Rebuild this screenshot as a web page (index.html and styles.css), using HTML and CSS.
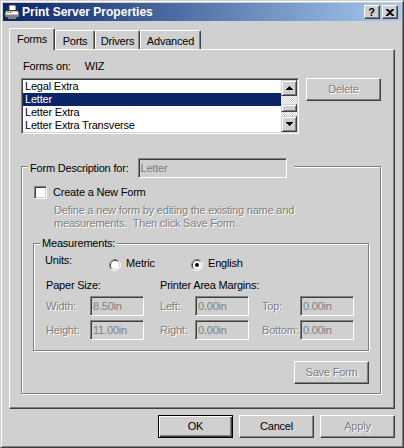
FILE: index.html
```html
<!DOCTYPE html>
<html lang="en">
<head>
    <meta charset="UTF-8">
    <meta name="viewport" content="width=device-width, initial-scale=1.0">
    <title>Print Server Properties</title>
    <link rel="stylesheet" href="styles.css">
</head>
<body>
    <div class="window">
        <div class="titlebar">
            <svg class="app-icon" width="16" height="16" viewBox="0 0 16 16">
                <path d="M5 1h6l1 1v5H5z" fill="#fff" stroke="#404040" stroke-width="1"/>
                <path d="M2.5 6.5h11l1.5 2v4.5h-14v-4.5z" fill="#c0c0c0" stroke="#404040"/>
                <rect x="2" y="8" width="12" height="2" fill="#fff"/>
                <rect x="3" y="8" width="2" height="1" fill="#00c000"/>
                <rect x="6" y="8" width="1" height="1" fill="#e00000"/>
                <rect x="2" y="11" width="12" height="1" fill="#808080"/>
                <rect x="4" y="13" width="8" height="2" fill="#808080"/>
            </svg>
            <span class="title">Print Server Properties</span>
            <div class="caption-buttons">
                <div class="cap-btn help">?</div>
                <div class="cap-btn close">
                    <svg width="8" height="7" viewBox="0 0 8 7">
                        <path d="M0 0h2l2 2 2-2h2v1L5 3.5 8 6v1H6L4 5 2 7H0V6l3-2.5L0 1z" fill="#000"/>
                    </svg>
                </div>
            </div>
        </div>

        <div class="tabs">
            <div class="tab active">Forms</div>
            <div class="tab">Ports</div>
            <div class="tab">Drivers</div>
            <div class="tab">Advanced</div>
        </div>

        <div class="panel">
            <div class="forms-on">Forms on:<span class="server">WIZ</span></div>

            <div class="list-row">
                <div class="listbox">
                    <ul class="items">
                        <li>Legal Extra</li>
                        <li class="selected">Letter</li>
                        <li>Letter Extra</li>
                        <li>Letter Extra Transverse</li>
                    </ul>
                    <div class="scrollbar">
                        <div class="sb-btn">
                            <svg width="7" height="4" viewBox="0 0 7 4"><path d="M3 0h1v1h1v1h1v1h1v1H0V3h1V2h1V1h1z" fill="#000"/></svg>
                        </div>
                        <div class="sb-track"><div class="sb-thumb"></div></div>
                        <div class="sb-btn">
                            <svg width="7" height="4" viewBox="0 0 7 4"><path d="M0 0h7v1H6v1H5v1H4v1H3V3H2V2H1V1H0z" fill="#000"/></svg>
                        </div>
                    </div>
                </div>
                <div class="btn disabled delete-btn">Delete</div>
            </div>

            <div class="group desc-group">
                <div class="legend legend-wide">
                    <span>Form Description for:</span>
                    <span class="field legend-field">Letter</span>
                </div>

                <div class="check-row">
                    <span class="checkbox"></span>
                    <span>Create a New Form</span>
                </div>

                <p class="hint disabled-text">Define a new form by editing the existing name and<br>measurements.&nbsp; Then click Save Form.</p>

                <div class="group measure-group">
                    <div class="legend">Measurements:</div>

                    <div class="units-row">
                        <span class="units-label">Units:</span>
                        <label class="radio metric">
                            <svg width="12" height="12" viewBox="0 0 12 12">
                                <path d="M2.11 9.89A5.5 5.5 0 0 1 9.89 2.11" fill="none" stroke="#808080"/>
                                <path d="M9.89 2.11A5.5 5.5 0 0 1 2.11 9.89" fill="none" stroke="#fff"/>
                                <path d="M2.82 9.18A4.5 4.5 0 0 1 9.18 2.82" fill="none" stroke="#404040"/>
                                <path d="M9.18 2.82A4.5 4.5 0 0 1 2.82 9.18" fill="none" stroke="#d0d0d0"/>
                                <circle cx="6" cy="6" r="4" fill="#fff"/>
                            </svg>
                            <span>Metric</span>
                        </label>
                        <label class="radio">
                            <svg width="12" height="12" viewBox="0 0 12 12">
                                <path d="M2.11 9.89A5.5 5.5 0 0 1 9.89 2.11" fill="none" stroke="#808080"/>
                                <path d="M9.89 2.11A5.5 5.5 0 0 1 2.11 9.89" fill="none" stroke="#fff"/>
                                <path d="M2.82 9.18A4.5 4.5 0 0 1 9.18 2.82" fill="none" stroke="#404040"/>
                                <path d="M9.18 2.82A4.5 4.5 0 0 1 2.82 9.18" fill="none" stroke="#d0d0d0"/>
                                <circle cx="6" cy="6" r="4" fill="#fff"/>
                                <circle cx="6" cy="6" r="2" fill="#000"/>
                            </svg>
                            <span>English</span>
                        </label>
                    </div>

                    <div class="size-grid">
                        <span class="head-paper">Paper Size:</span>
                        <span class="head-margins">Printer Area Margins:</span>

                        <span class="disabled-text">Width:</span>
                        <span class="field">8.50in</span>
                        <span class="disabled-text">Left:</span>
                        <span class="field">0.00in</span>
                        <span class="disabled-text">Top:</span>
                        <span class="field">0.00in</span>

                        <span class="disabled-text">Height:</span>
                        <span class="field">11.00in</span>
                        <span class="disabled-text">Right:</span>
                        <span class="field">0.00in</span>
                        <span class="disabled-text">Bottom:</span>
                        <span class="field">0.00in</span>
                    </div>
                </div>

                <div class="save-row">
                    <div class="btn disabled">Save Form</div>
                </div>
            </div>
        </div>

        <div class="dialog-buttons">
            <div class="btn default">OK</div>
            <div class="btn">Cancel</div>
            <div class="btn disabled">Apply</div>
        </div>
    </div>
</body>
</html>
```

FILE: styles.css
```css
* {
    box-sizing: border-box;
}
body {
    margin: 0;
    font-family: "Liberation Sans", Arial, sans-serif;
    font-size: 11px;
    line-height: 13px;
    letter-spacing: -0.2px;
    color: #000;
    background: #d0d0d0;
}
.window {
    width: 404px;
    height: 448px;
    background-color: #d0d0d0;
    border: 1px solid;
    border-color: #d0d0d0 #404040 #404040 #d0d0d0;
    box-shadow: inset 1px 1px 0 #fff, inset -1px -1px 0 #808080;
    padding: 2px;
}

/* title bar */
.titlebar {
    height: 18px;
    display: flex;
    align-items: center;
    background: linear-gradient(to right, #0a246a, #a6caf0);
    color: #fff;
}
.app-icon {
    margin-left: 1px;
    flex-shrink: 0;
}
.title {
    margin-left: 2px;
    font-weight: bold;
    font-size: 12px;
    letter-spacing: 0;
}
.caption-buttons {
    margin-left: auto;
    margin-right: 3px;
    display: flex;
    gap: 2px;
}
.cap-btn {
    width: 16px;
    height: 14px;
    background-color: #d0d0d0;
    border: 1px solid;
    border-color: #fff #404040 #404040 #fff;
    box-shadow: inset -1px -1px 0 #808080;
    display: flex;
    align-items: center;
    justify-content: center;
    color: #000;
}
.cap-btn.help {
    font-weight: bold;
    font-size: 11px;
    line-height: 12px;
    padding-right: 1px;
}
.cap-btn.close svg {
    margin-left: -1px;
}

/* tabs */
.tabs {
    display: flex;
    align-items: flex-end;
    height: 21px;
    margin: 7px 6px 0 6px;
}
.tab {
    height: 19px;
    padding-top: 4px;
    text-align: center;
    background-color: #d0d0d0;
    border-top: 1px solid #fff;
    border-left: 1px solid #fff;
    border-right: 1px solid #404040;
    border-radius: 2px 2px 0 0;
    box-shadow: inset -1px 0 0 #808080;
}
.tab:nth-child(2) { width: 40px; }
.tab:nth-child(3) { width: 45px; }
.tab:nth-child(4) { width: 61px; }
.tab.active {
    width: 46px;
    height: 22px;
    margin-bottom: -1px;
    padding-top: 4px;
    position: relative;
    z-index: 1;
}

/* tab page */
.panel {
    height: 360px;
    margin: 0 6px;
    border: 1px solid;
    border-color: #fff #404040 #404040 #fff;
    box-shadow: inset -1px -1px 0 #808080;
}
.forms-on {
    margin: 10px 0 0 13px;
}
.server {
    margin-left: 14px;
}
.list-row {
    display: flex;
    align-items: flex-start;
    margin: 5px 0 0 11px;
}
.listbox {
    width: 278px;
    height: 56px;
    display: flex;
    background-color: #fff;
    border: 1px solid;
    border-color: #808080 #fff #fff #808080;
    box-shadow: inset 1px 1px 0 #404040, inset -1px -1px 0 #d0d0d0;
    padding: 1px;
}
.items {
    list-style: none;
    margin: 0;
    padding: 0;
    width: 258px;
}
.items li {
    height: 13px;
    line-height: 13px;
    padding-left: 2px;
    white-space: nowrap;
}
.items li.selected {
    background-color: #0a246a;
    color: #fff;
}
.scrollbar {
    width: 16px;
    display: flex;
    flex-direction: column;
}
.sb-btn {
    width: 16px;
    height: 16px;
    display: flex;
    align-items: center;
    justify-content: center;
    background-color: #d0d0d0;
    border: 1px solid;
    border-color: #d0d0d0 #404040 #404040 #d0d0d0;
    box-shadow: inset 1px 1px 0 #fff, inset -1px -1px 0 #808080;
}
.sb-track {
    height: 20px;
    padding-top: 8px;
    background: repeating-conic-gradient(#fff 0 25%, #d0d0d0 0 50%) 0 0 / 2px 2px;
}
.sb-thumb {
    height: 8px;
    background-color: #d0d0d0;
    border: 1px solid;
    border-color: #d0d0d0 #404040 #404040 #d0d0d0;
    box-shadow: inset 1px 1px 0 #fff, inset -1px -1px 0 #808080;
}

/* buttons */
.btn {
    width: 75px;
    height: 23px;
    display: flex;
    align-items: center;
    justify-content: center;
    background-color: #d0d0d0;
    border: 1px solid;
    border-color: #fff #404040 #404040 #fff;
    box-shadow: inset -1px -1px 0 #808080;
}
.btn.default {
    border-color: #000;
    box-shadow: inset 1px 1px 0 #fff, inset -1px -1px 0 #404040, inset -2px -2px 0 #808080;
}
.btn.disabled,
.disabled-text {
    color: #808080;
    text-shadow: 1px 1px 0 #fff;
}
.delete-btn {
    margin-left: 7px;
}

/* group boxes */
.group {
    border: 1px solid #808080;
    box-shadow: inset 1px 1px 0 #fff, 1px 1px 0 #fff;
}
.desc-group {
    width: 360px;
    height: 228px;
    margin: 32px 0 0 11px;
}
.legend {
    width: fit-content;
    height: 13px;
    margin: -7px 0 0 6px;
    padding: 0 2px;
    background-color: #d0d0d0;
}
.legend-wide {
    display: flex;
    align-items: center;
    height: 20px;
    margin-top: -9px;
    padding-right: 7px;
    gap: 9px;
}
.field {
    display: flex;
    align-items: center;
    width: 54px;
    height: 20px;
    padding-left: 2px;
    color: #808080;
    background-color: #d0d0d0;
    border: 1px solid;
    border-color: #808080 #fff #fff #808080;
    box-shadow: inset 1px 1px 0 #404040, inset -1px -1px 0 #d0d0d0;
}
.legend-field {
    width: 149px;
}
.check-row {
    display: flex;
    align-items: center;
    gap: 6px;
    margin: 8px 0 0 12px;
    height: 13px;
}
.checkbox {
    width: 13px;
    height: 13px;
    background-color: #fff;
    border: 1px solid;
    border-color: #808080 #fff #fff #808080;
    box-shadow: inset 1px 1px 0 #404040, inset -1px -1px 0 #d0d0d0;
}
.hint {
    margin: 5px 0 0 32px;
}
.measure-group {
    margin: 13px 11px 0 11px;
    padding-bottom: 10px;
}
.units-row {
    display: flex;
    align-items: flex-start;
    height: 17px;
    margin: 4px 0 0 11px;
}
.units-label {
    width: 64px;
}
.radio {
    display: flex;
    align-items: flex-start;
    gap: 5px;
    width: 82px;
}
.radio svg {
    margin-top: 5px;
}
.radio span {
    margin-top: 3px;
}
.size-grid {
    display: grid;
    grid-template-columns: 44px 70px 35px 67px 38px 54px;
    grid-template-rows: 13px 20px 20px;
    row-gap: 4px;
    align-items: center;
    margin: 8px 0 0 12px;
}
.head-paper {
    grid-column: 1 / 3;
}
.head-margins {
    grid-column: 3 / 7;
}
.save-row {
    display: flex;
    justify-content: flex-end;
    margin: 10px 11px 0 0;
}

/* dialog buttons */
.dialog-buttons {
    display: flex;
    justify-content: flex-end;
    gap: 6px;
    margin: 6px 6px 0 0;
}
```
